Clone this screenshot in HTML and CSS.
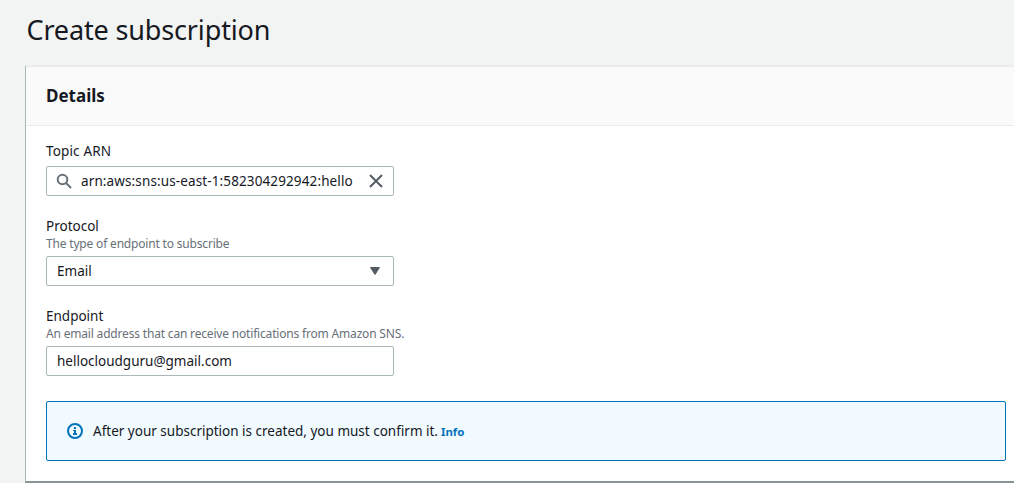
FILE: index.html
```html
<!DOCTYPE html>
<html lang="en">
<head>
<meta charset="utf-8">
<title>Create subscription</title>
<link rel="stylesheet" href="styles.css">
</head>
<body>
<main class="page">
  <h1 class="title">Create subscription</h1>
  <section class="panel">
    <header class="panel-header"><h2 class="panel-title">Details</h2></header>
    <div class="panel-body">
      <div class="field">
        <div class="label label-topic">Topic ARN</div>
        <div class="control search">
          <svg class="search-icon" width="16" height="16" viewBox="0 0 16 16"><circle cx="6.5" cy="6.5" r="4.8"/><path d="M10 10l5 5"/></svg>
          <span class="value-arn">arn:aws:sns:us-east-1:582304292942:hello</span>
          <svg class="clear-icon" width="16" height="16" viewBox="0 0 16 16"><path d="M2 2l12 12M14 2L2 14"/></svg>
        </div>
      </div>
      <div class="field">
        <div class="label">Protocol</div>
        <div class="hint">The type of endpoint to subscribe</div>
        <div class="control select">
          <span>Email</span>
          <svg class="caret" width="12" height="10" viewBox="0 0 12 10"><path d="M1.5 1.5h9L6 8.5z"/></svg>
        </div>
      </div>
      <div class="field">
        <div class="label">Endpoint</div>
        <div class="hint">An email address that can receive notifications from Amazon SNS.</div>
        <div class="control"><span>hellocloudguru@gmail.com</span></div>
      </div>
      <div class="alert">
        <svg class="info-icon" width="16" height="16" viewBox="0 0 16 16"><circle cx="8" cy="8" r="7"/><path d="M7 4h2v2H7zM6 7h3v3h1v2H6v-2h1V8H6z"/></svg>
        <span class="alert-text">After your subscription is created, you must confirm it.</span>
        <a class="info-link">Info</a>
      </div>
    </div>
  </section>
</main>
</body>
</html>
```
FILE: styles.css
```css
* { box-sizing: border-box; }
body {
  margin: 0;
  height: 483px;
  overflow: hidden;
  background: #f2f3f3;
  color: #16191f;
  font: 13.5px/20px "Noto Sans", "Open Sans", sans-serif;
}
.page { padding: 12px 0 0 25px; }
.title {
  margin: 0 0 17px 1.5px;
  font-size: 27px;
  line-height: 36px;
  font-weight: 400;
  letter-spacing: -0.15px;
}
.panel {
  width: 1001px;
  height: 418px;
  border: 1px solid #aab7b8;
  border-top: 2px solid #eaeded;
  border-bottom: 2px solid #879596;
  background: #fff;
}
.panel-header {
  height: 59px;
  padding: 18px 20px;
  border-bottom: 1px solid #eaeded;
  background: #fafafa;
}
.panel-title {
  margin: 0;
  font-size: 17px;
  line-height: 22px;
  font-weight: 700;
}
.panel-body {
  display: flex;
  flex-direction: column;
  gap: 20px;
  padding: 15px 20px 0;
}
.field { width: 348px; }
.label { height: 20px; white-space: nowrap; }
.label-topic { letter-spacing: 0.15px; }
.hint {
  height: 15px;
  font-size: 12px;
  line-height: 16px;
  letter-spacing: -0.18px;
  color: #687078;
  white-space: nowrap;
}
.control {
  display: flex;
  align-items: center;
  height: 30px;
  margin-top: 5px;
  padding: 0 10px;
  border: 1px solid #aab7b8;
  border-radius: 2px;
  white-space: nowrap;
}
.search { padding-left: 9px; }
.value-arn { letter-spacing: 0.12px; }
.select { justify-content: space-between; padding-right: 12px; }
.search-icon { margin-right: 9px; fill: none; stroke: #687078; stroke-width: 2; }
.clear-icon { margin-left: auto; margin-right: -1px; fill: none; stroke: #545b64; stroke-width: 2; }
.caret { fill: #545b64; stroke: #545b64; stroke-linejoin: round; }
.alert {
  display: flex;
  align-items: center;
  width: 960px;
  height: 60px;
  margin-top: 5px;
  padding-left: 20px;
  border: 1px solid #0073bb;
  border-radius: 2px;
  background: #f1faff;
}
.info-icon { margin-right: 10px; fill: #0073bb; }
.info-icon circle { fill: none; stroke: #0073bb; stroke-width: 2; }
.alert-text { width: 348px; white-space: nowrap; }
.info-link { padding-top: 1px; color: #0073bb; font-size: 11.4px; font-weight: 700; }
```
